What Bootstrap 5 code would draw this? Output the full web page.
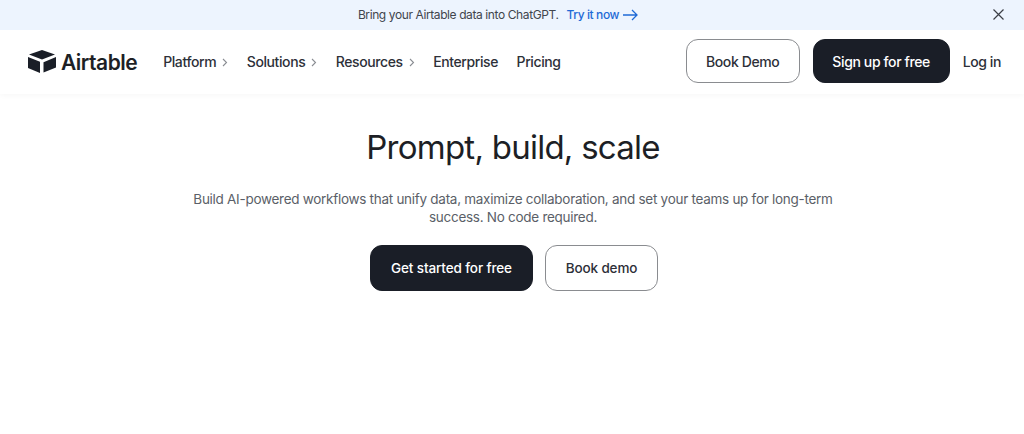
<!DOCTYPE html>
<html lang="en">
<head>
  <meta charset="UTF-8">
  <meta name="viewport" content="width=device-width, initial-scale=1.0">
  <title>Airtable</title>
  <link href="https://cdn.jsdelivr.net/npm/bootstrap@5.3.3/dist/css/bootstrap.min.css" rel="stylesheet">
  <style>
    body {
      font-family: Inter, "Liberation Sans", sans-serif;
      color: #1d1f25;
      background: #fff;
    }

    /* Promo strip */
    .promo-strip {
      height: 30px;
      padding-right: 28px;
      background: #edf4fe;
      font-size: 12px;
      letter-spacing: -.4px;
      color: #41454d;
    }
    .promo-link {
      color: #1f6ad6;
      font-weight: 500;
      margin-left: 8px;
      text-decoration: none;
    }
    .promo-close {
      right: 19px;
      top: 8px;
      line-height: 0;
    }

    /* Top nav */
    .top-nav {
      height: 64px;
      padding: 0 23px 2px 28px;
      box-shadow: 0 1px 6px rgba(0, 0, 0, .04);
    }
    .brand-name {
      font-size: 21px;
      font-weight: 600;
      letter-spacing: -.5px;
      color: #1d1f25;
      margin-left: 5px;
      padding-top: 3px;
    }
    .nav-items {
      margin-left: 26px;
      gap: 18.5px;
    }
    .nav-entry {
      font-size: 14px;
      font-weight: 500;
      letter-spacing: -.4px;
      color: #2d3038;
      text-decoration: none;
    }
    .nav-entry svg {
      margin-left: 6px;
    }
    .btn-outline-air, .btn-dark-air {
      font-weight: 500;
      border-radius: 12px;
      display: inline-flex;
      align-items: center;
      justify-content: center;
      padding: 0;
    }
    .btn-outline-air {
      background: #fff;
      border: 1px solid #8a8c90;
      color: #2d3038;
    }
    .btn-dark-air {
      background: #1a1e27;
      border: 1px solid #1a1e27;
      color: #fff;
    }
    .nav-btn {
      height: 44px;
      font-size: 14px;
      letter-spacing: -.38px;
    }
    .w-demo { width: 114px; }
    .w-signup { width: 137px; margin-left: 13px; }
    .login-link { margin-left: 13px; }

    /* Hero */
    .hero-title {
      font-size: 33px;
      font-weight: 400;
      letter-spacing: -.75px;
      line-height: 40px;
      margin: 0;
      padding: 33px 0 0 2px;
      color: #1d1f25;
    }
    .hero-text {
      width: 660px;
      padding-left: 2px;
      font-size: 13.5px;
      letter-spacing: -.28px;
      line-height: 18px;
      color: #5b5f68;
      margin: 23px auto 0;
    }
    .hero-actions {
      gap: 12px;
      margin-top: 19px;
      padding-left: 4px;
    }
    .hero-btn {
      height: 46px;
      font-size: 13.5px;
      letter-spacing: -.12px;
    }
    .w-start { width: 163px; }
    .w-book { width: 113px; }
  </style>
</head>

<body>
  <!-- Promo -->
  <div class="promo-strip position-relative d-flex align-items-center justify-content-center">
    <span>Bring your Airtable data into ChatGPT.</span>
    <a href="#" class="promo-link d-inline-flex align-items-center">Try it now
      <svg class="ms-1" width="15" height="12" viewBox="0 0 15 12" fill="none" stroke="#1f6ad6" stroke-width="1.3"><path d="M0 6H14M9 1l5 5-5 5"/></svg>
    </a>
    <a href="#" class="promo-close position-absolute" aria-label="Close">
      <svg width="13" height="13" viewBox="0 0 13 13" fill="none" stroke="#3b3e45" stroke-width="1.2"><path d="M1.5 1.5l10 10M11.5 1.5l-10 10"/></svg>
    </a>
  </div>

  <!-- Nav -->
  <nav class="top-nav d-flex align-items-center">
    <a href="#" class="d-flex align-items-center text-decoration-none">
      <svg width="28" height="23" viewBox="0 0 28 23">
        <path fill="#1a1e27" d="M14 0 L27 4.6 L14 9.6 L1 4.6 Z"/>
        <path fill="#1a1e27" d="M0 7 L12 11.8 V23 L0 18 Z"/>
        <path fill="#1a1e27" d="M15.5 12.2 L28 7 V17.6 L15.5 22.6 Z"/>
      </svg>
      <span class="brand-name">Airtable</span>
    </a>
    <div class="nav-items d-flex align-items-center">
      <a href="#" class="nav-entry">Platform<svg width="6" height="9" viewBox="0 0 6 9" fill="none" stroke="#8a8d93" stroke-width="1.1"><path d="M1 1l3.5 3.5L1 8"/></svg></a>
      <a href="#" class="nav-entry">Solutions<svg width="6" height="9" viewBox="0 0 6 9" fill="none" stroke="#8a8d93" stroke-width="1.1"><path d="M1 1l3.5 3.5L1 8"/></svg></a>
      <a href="#" class="nav-entry">Resources<svg width="6" height="9" viewBox="0 0 6 9" fill="none" stroke="#8a8d93" stroke-width="1.1"><path d="M1 1l3.5 3.5L1 8"/></svg></a>
      <a href="#" class="nav-entry">Enterprise</a>
      <a href="#" class="nav-entry">Pricing</a>
    </div>
    <div class="ms-auto d-flex align-items-center">
      <a href="#" class="btn btn-outline-air nav-btn w-demo">Book Demo</a>
      <a href="#" class="btn btn-dark-air nav-btn w-signup">Sign up for free</a>
      <a href="#" class="nav-entry login-link">Log in</a>
    </div>
  </nav>

  <!-- Hero -->
  <main class="text-center">
    <h1 class="hero-title">Prompt, build, scale</h1>
    <p class="hero-text">Build AI-powered workflows that unify data, maximize collaboration, and set your teams up for long-term success. No code required.</p>
    <div class="hero-actions d-flex justify-content-center">
      <a href="#" class="btn btn-dark-air hero-btn w-start">Get started for free</a>
      <a href="#" class="btn btn-outline-air hero-btn w-book">Book demo</a>
    </div>
  </main>

  <script src="https://cdn.jsdelivr.net/npm/bootstrap@5.3.3/dist/js/bootstrap.bundle.min.js"></script>
</body>
</html>
